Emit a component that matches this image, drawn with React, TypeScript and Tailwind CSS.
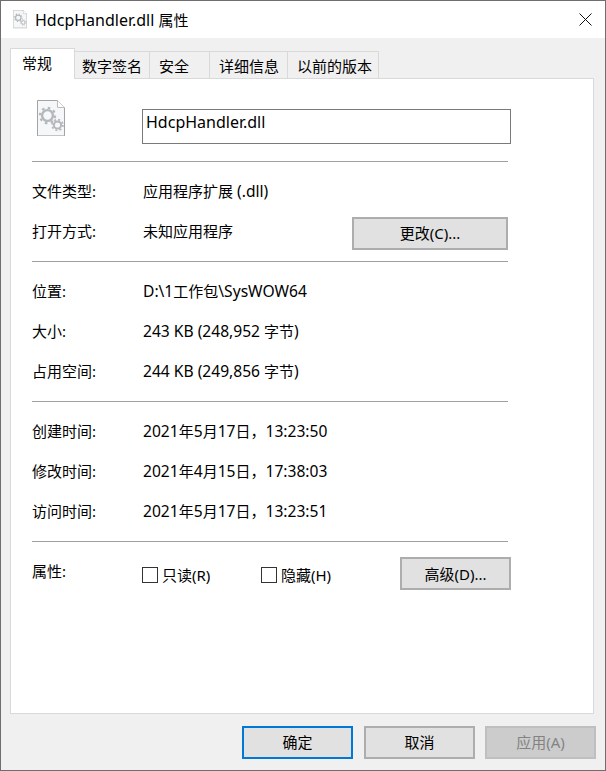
const font = { fontFamily: '"Noto Sans", "Noto Sans CJK SC", sans-serif' };

// latin runs sit a little larger than the CJK ones, as in the Windows font pairing
function Mixed({ text, latin }: { text: string; latin: string }) {
  const parts = text.split(/([\u4e00-\u9fff，]+)/);
  return (
    <>
      {parts.map((part, i) =>
        i % 2 === 0 ? (
          <span key={i} className={latin}>
            {part}
          </span>
        ) : (
          <span key={i}>{part}</span>
        )
      )}
    </>
  );
}

function DllIcon({ size }: { size: number }) {
  return (
    <svg width={size} height={size * 1.3} viewBox="0 0 28 36.4" fill="none">
      <path d="M.5.5h20l7 7v28.4H.5z" fill="#f6f7f8" stroke="#a3a3a3" />
      <path d="M20.5.5v7h7" fill="#fff" stroke="#bdbdbd" />
      <circle cx="10.5" cy="15.5" r="5.4" stroke="#b4b8bb" strokeWidth="2.4" />
      <circle cx="10.5" cy="15.5" r="7.6" stroke="#b4b8bb" strokeWidth="2.2" strokeDasharray="2.6 3.37" />
      <circle cx="20.5" cy="25" r="3.6" stroke="#b4b8bb" strokeWidth="2" />
      <circle cx="20.5" cy="25" r="5.4" stroke="#b4b8bb" strokeWidth="1.8" strokeDasharray="2 2.24" />
    </svg>
  );
}

function Row({ label, value }: { label: string; value: string }) {
  return (
    <div className="flex h-10 items-center">
      <div className="w-[111px]">{label}</div>
      <div>
        <Mixed text={value} latin="text-[15.6px]" />
      </div>
    </div>
  );
}

function Divider() {
  return <div className="mb-[9px] mt-[10px] h-px w-[476px] bg-[#a0a0a0]" />;
}

function Checkbox({ label }: { label: string }) {
  return (
    <div className="flex items-center gap-1">
      <span className="size-4 border border-[#333333] bg-white" />
      <span>{label}</span>
    </div>
  );
}

function FooterButton({ className, children }: { className: string; children: React.ReactNode }) {
  return <button className={`h-[33px] w-[111px] pb-px ${className}`}>{children}</button>;
}

const tabs = [
  { name: "数字签名", width: "w-[75px]", pad: "pl-[7px]" },
  { name: "安全", width: "w-[60px]", pad: "pl-[9px]" },
  { name: "详细信息", width: "w-[78px]", pad: "pl-[9px]" },
  { name: "以前的版本", width: "w-[91px]", pad: "pl-[9px]" },
];

export default function App() {
  return (
    <div
      style={font}
      className="flex h-[771px] w-[606px] flex-col overflow-hidden border border-[#6e6e6e] bg-[#f0f0f0] text-[15px] leading-5 text-black"
    >
      <div className="flex h-[37px] shrink-0 items-center bg-white pl-3">
        <DllIcon size={14} />
        <span className="ml-2">
          <Mixed text="HdcpHandler.dll 属性" latin="text-[16px]" />
        </span>
        <svg className="ml-auto mr-[13px]" width="13" height="13" viewBox="0 0 13 13" stroke="#111" fill="none">
          <path d="M.5.5l12 12M12.5.5l-12 12" />
        </svg>
      </div>

      <div className="mx-[9px] mt-[10px] flex h-[30px] shrink-0 items-end">
        <div className="relative z-10 -mb-px h-[31px] w-[65px] border border-b-0 border-[#d9d9d9] bg-white pl-[11px] pt-[4px]">常规</div>
        {tabs.map((tab) => (
          <div
            key={tab.name}
            className={`h-[27px] border border-l-0 border-b-0 border-[#d9d9d9] bg-[#f0f0f0] pt-[4px] ${tab.width} ${tab.pad}`}
          >
            {tab.name}
          </div>
        ))}
      </div>

      <div className="mx-[9px] h-[636px] w-[584px] shrink-0 border border-[#d9d9d9] bg-white pl-[21px]">
        <div className="flex items-start pt-[17px]">
          <div className="ml-[5px] w-[105px] pt-[4px]">
            <DllIcon size={28} />
          </div>
          <div className="mt-[13px] flex h-[35px] w-[369px] items-start border border-[#7a7a7a] pl-[3px] pt-[2px] text-[16px]">HdcpHandler.dll</div>
        </div>
        <div className="mb-[9px] mt-[17px] h-px w-[476px] bg-[#a0a0a0]" />
        <Row label="文件类型:" value="应用程序扩展 (.dll)" />
        <div className="flex h-10 items-center">
          <div className="w-[111px]">打开方式:</div>
          <div>未知应用程序</div>
          <button className="ml-auto mr-[85px] mt-[4px] h-[33px] w-[156px] border-2 border-[#adadad] bg-[#e1e1e1]">更改(C)...</button>
        </div>
        <Divider />
        <Row label="位置:" value="D:\1工作包\SysWOW64" />
        <Row label="大小:" value="243 KB (248,952 字节)" />
        <Row label="占用空间:" value="244 KB (249,856 字节)" />
        <Divider />
        <Row label="创建时间:" value="2021年5月17日，13:23:50" />
        <Row label="修改时间:" value="2021年4月15日，17:38:03" />
        <Row label="访问时间:" value="2021年5月17日，13:23:51" />
        <Divider />
        <div className="mt-[15px] flex h-[33px] items-center">
          <div className="w-[110px] -mt-[5px]">属性:</div>
          <div className="w-[119px] pt-[3px]">
            <Checkbox label="只读(R)" />
          </div>
          <div className="w-[139px] pt-[3px]">
            <Checkbox label="隐藏(H)" />
          </div>
          <button className="h-[33px] w-[111px] border-2 border-[#adadad] bg-[#e1e1e1]">高级(D)...</button>
        </div>
      </div>

      <div className="flex justify-end gap-[10px] pr-[9px] pt-[12px]">
        <FooterButton className="mr-px border-2 border-[#0078d7] bg-[#e1e1e1]">确定</FooterButton>
        <FooterButton className="border-2 border-[#adadad] bg-[#e1e1e1]">取消</FooterButton>
        <FooterButton className="border-2 border-[#bfbfbf] bg-[#cccccc] text-[#838383]">应用(A)</FooterButton>
      </div>
    </div>
  );
}
